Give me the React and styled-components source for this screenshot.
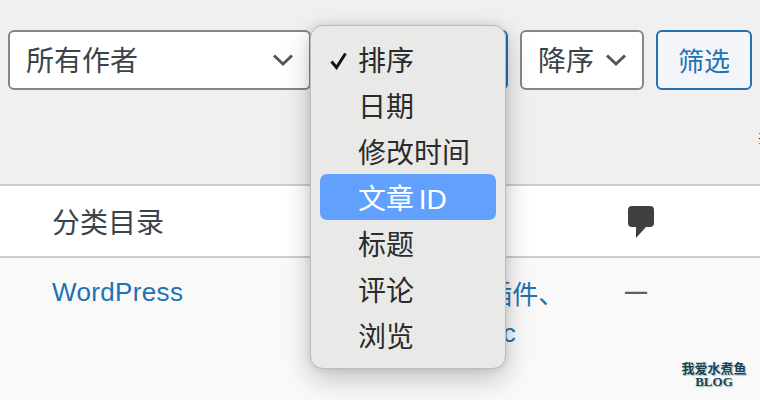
import React from "react";
import styled, { createGlobalStyle } from "styled-components";

const Global = createGlobalStyle`
  html, body { margin: 0; padding: 0; height: 100%; overflow: hidden; }
  body {
    background: #f0f0f1;
    font-family: "Liberation Sans", "Noto Sans CJK SC", sans-serif;
  }
`;

const Page = styled.div`
  position: relative;
  width: 760px;
  height: 400px;
  overflow: hidden;
`;

const Toolbar = styled.div`
  display: flex;
  gap: 12px;
  padding: 30px 0 0 8px;
  height: 60px;
`;

const Select = styled.div`
  box-sizing: border-box;
  width: ${(p) => p.$width}px;
  height: 60px;
  display: flex;
  align-items: center;
  justify-content: space-between;
  padding: 0 15px 0 16px;
  background: #fff;
  border: 2px solid ${(p) => (p.$focus ? "#2271b1" : "#7f8993")};
  border-radius: 6px;
  color: #3c434a;
  font-size: 28px;
  white-space: nowrap;
`;

const Label = styled.span`
  margin-bottom: 2px;
`;

const FilterButton = styled.div`
  box-sizing: border-box;
  width: 96px;
  height: 60px;
  padding-bottom: 2px;
  display: flex;
  align-items: center;
  justify-content: center;
  background: #f3f5f8;
  border: 2px solid #2271b1;
  border-radius: 6px;
  color: #2271b1;
  font-size: 26px;
`;

const PageCount = styled.div`
  height: 94px;
  display: flex;
  justify-content: flex-end;
  margin-right: -12px;
  color: #3c434a;
  font-size: 14px;
  line-height: 94px;
`;

const HeadRow = styled.div`
  box-sizing: border-box;
  display: grid;
  grid-template-columns: 52px 372px 200px 1fr;
  align-items: center;
  height: 74px;
  background: #fff;
  border-top: 2px solid #c9ced4;
  border-bottom: 2px solid #c9ced4;
  color: #3c434a;
  font-size: 28px;
`;

const BodyRow = styled.div`
  display: grid;
  grid-template-columns: 52px 372px 200px 1fr;
  height: 142px;
  background: #f9f9f9;
  padding-top: 18px;
  box-sizing: border-box;
  font-size: 26px;
  line-height: 38px;
`;

const Cell = styled.div`
  grid-column: ${(p) => p.$col};
  white-space: nowrap;
`;

const TitleCell = styled(Cell)`
  margin-top: -3px;
  letter-spacing: 0.35px;
`;

const TagCell = styled(Cell)`
  margin-left: -73px;
`;

const LinkText = styled.a`
  color: #2271b1;
  text-decoration: none;
`;

const Dash = styled.span`
  color: #5c6066;
  font-size: 22px;
  font-weight: 700;
  position: relative;
  top: -5px;
  left: 1px;
`;

const Menu = styled.ul`
  position: absolute;
  left: 310px;
  top: 25px;
  box-sizing: border-box;
  width: 196px;
  height: 344px;
  margin: 0;
  padding: 10px 9px 0;
  list-style: none;
  background: #e9e9e8;
  border: 1px solid #bdbdbd;
  border-radius: 13px;
  box-shadow: 0 10px 28px rgba(0, 0, 0, 0.22), 0 0 8px rgba(0, 0, 0, 0.12);
`;

const MenuItem = styled.li`
  position: relative;
  height: 46px;
  display: flex;
  align-items: center;
  padding-left: 38px;
  border-radius: 7px;
  font-size: 28px;
  word-spacing: -3px;
  color: ${(p) => (p.$active ? "#fff" : "#2b2b2b")};
  background: ${(p) => (p.$active ? "#62a0fd" : "transparent")};
`;

const Check = styled.svg`
  position: absolute;
  left: 9px;
  top: 15px;
  width: 19px;
  height: 19px;
`;

const Watermark = styled.div`
  position: absolute;
  right: 11px;
  top: 362px;
  width: 70px;
  text-align: center;
  color: #173f4f;
  font-family: "Liberation Serif", "Noto Sans CJK SC", serif;
  font-weight: 700;
  font-size: 13px;
  line-height: 13px;
  text-shadow: 0 0 2px #fff, 1px 1px 1px #7fa8ad;
`;

const Chevron = () => (
  <svg width="22" height="14" viewBox="0 0 22 14">
    <path d="M2 2.5 L11 11 L20 2.5" fill="none" stroke="#50575e" strokeWidth="3" />
  </svg>
);

const CommentSvg = styled.svg`
  display: block;
  margin: 1px 0 0 4px;
`;

const CommentIcon = () => (
  <CommentSvg width="26" height="32" viewBox="0 0 26 32">
    <path d="M4 0 H22 A4 4 0 0 1 26 4 V17 A4 4 0 0 1 22 21 H18 L8 32 V21 H4 A4 4 0 0 1 0 17 V4 A4 4 0 0 1 4 0 Z" fill="#404042" />
  </CommentSvg>
);

const options = ["排序", "日期", "修改时间", "文章 ID", "标题", "评论", "浏览"];

export default function App() {
  return (
    <Page>
      <Global />
      <Toolbar>
        <Select $width={303}>
          <Label>所有作者</Label>
          <Chevron />
        </Select>
        <Select $width={185} $focus />
        <Select $width={124}>
          <Label>降序</Label>
          <Chevron />
        </Select>
        <FilterButton>筛选</FilterButton>
      </Toolbar>
      <PageCount>共</PageCount>
      <HeadRow>
        <Cell $col={2}>分类目录</Cell>
        <Cell $col={4}>
          <CommentIcon />
        </Cell>
      </HeadRow>
      <BodyRow>
        <TitleCell $col={2}>
          <LinkText>WordPress</LinkText>
        </TitleCell>
        <TagCell $col={3}>
          <LinkText>
            WordPress 插件、
            <br />
            Themes Basic
          </LinkText>
        </TagCell>
        <Cell $col={4}>
          <Dash>—</Dash>
        </Cell>
      </BodyRow>
      <Menu>
        {options.map((o, i) => (
          <MenuItem key={o} $active={o === "文章 ID"}>
            {i === 0 && (
              <Check viewBox="0 0 19 19">
                <path d="M2.5 10.5 L7.5 16.5 L16.5 2.5" fill="none" stroke="#111" strokeWidth="3" />
              </Check>
            )}
            {o}
          </MenuItem>
        ))}
      </Menu>
      <Watermark>
        我爱水煮鱼
        <br />
        BLOG
      </Watermark>
    </Page>
  );
}
